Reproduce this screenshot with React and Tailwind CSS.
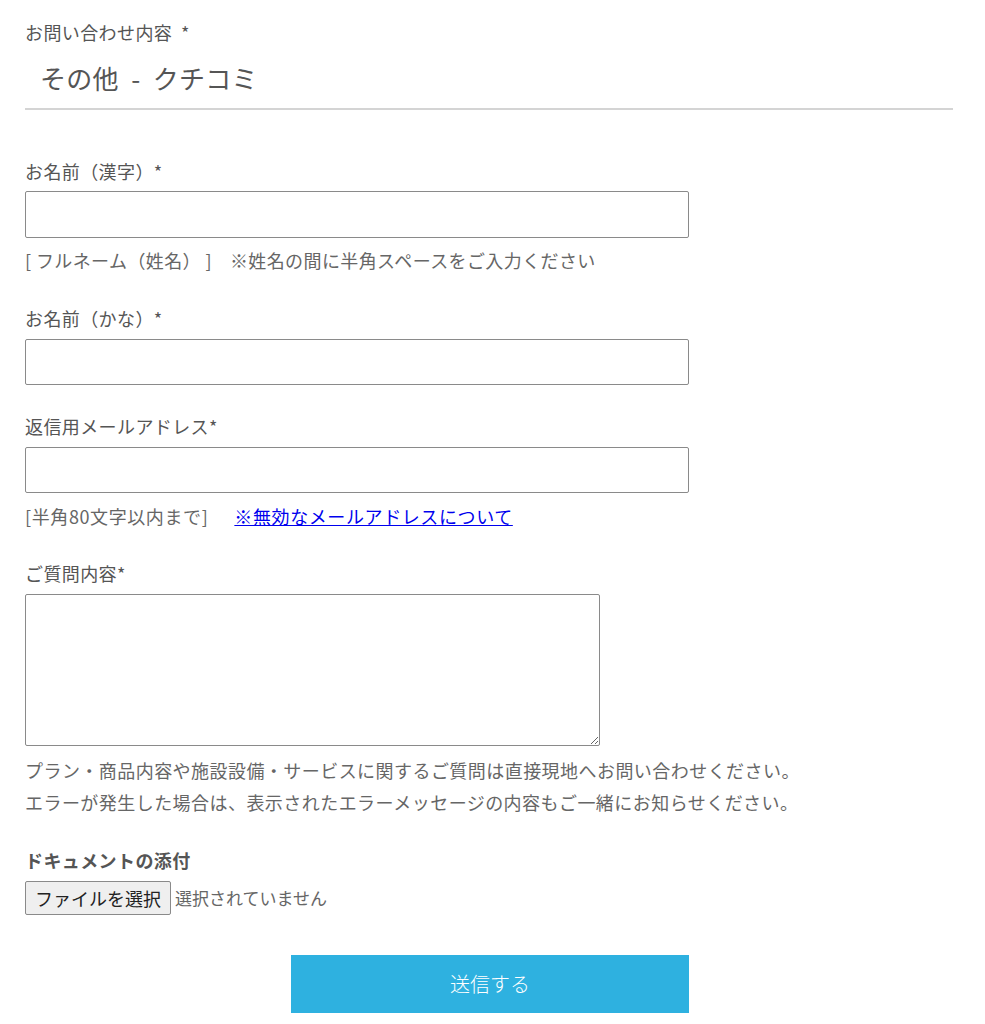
import React from "react";

const fontStack = { fontFamily: '"Noto Sans CJK JP", "Noto Sans", sans-serif' };

const Label = ({ children, className = "" }) => (
  <div className={`text-[18px] tracking-[0.4px] leading-[26px] text-[#555] ${className}`}>{children}</div>
);

const TextInput = ({ className = "" }) => (
  <input
    type="text"
    className={`block w-[664px] border border-[#8a8a8a] rounded-[2px] px-2 text-[17px] bg-white ${className}`}
  />
);

const App = () => {
  return (
    <div style={fontStack} className="bg-white min-h-[1024px] pl-[25px] pt-[19px] w-[953px]">
      <Label>お問い合わせ内容&nbsp;&nbsp;*</Label>
      <div className="mt-[15px] pl-[15px] text-[26px] tracking-[0.3px] leading-[36px] text-[#555]">
        その他&nbsp;&nbsp;-&nbsp;&nbsp;クチコミ
      </div>
      <hr className="mt-[12px] border-0 h-[2px] bg-[#d4d4d4]" />

      <Label className="mt-[48px]">お名前（漢字）*</Label>
      <TextInput className="mt-[7px] h-[47px]" />
      <div className="mt-[9px] text-[18px] tracking-[0.4px] leading-[26px] text-[#666]">
        [&nbsp;フルネーム（姓名）&nbsp;]<span className="ml-[18px]">※姓名の間に半角スペースをご入力ください</span>
      </div>

      <Label className="mt-[32px]">お名前（かな）*</Label>
      <TextInput className="mt-[8px] h-[46px]" />

      <Label className="mt-[28px]">返信用メールアドレス*</Label>
      <TextInput className="mt-[8px] h-[46px]" />
      <div className="mt-[10px] text-[18px] tracking-[0.6px] leading-[26px] text-[#666]">
        [半角80文字以内まで]
        <a href="#" className="ml-[26px] text-[#0000ee] underline">
          ※無効なメールアドレスについて
        </a>
      </div>

      <Label className="mt-[31px]">ご質問内容*</Label>
      <textarea className="block mt-[8px] w-[575px] h-[152px] border border-[#8a8a8a] rounded-[2px] p-2 text-[17px] bg-white" />
      <div className="mt-[8px] text-[18px] tracking-[0.45px] leading-[32px] text-[#666]">
        <p>プラン・商品内容や施設設備・サービスに関するご質問は直接現地へお問い合わせください。</p>
        <p>エラーが発生した場合は、表示されたエラーメッセージの内容もご一緒にお知らせください。</p>
      </div>

      <Label className="mt-[29px] font-bold">ドキュメントの添付</Label>
      <div className="mt-[8px] flex items-center gap-[4px]">
        <button className="h-[34px] w-[146px] border border-[#8a8a8a] rounded-[2px] bg-[#efefef] text-[18px] text-[#222] px-[4px] whitespace-nowrap">
          ファイルを選択
        </button>
        <span className="text-[17px] text-[#666]">選択されていません</span>
      </div>

      <div className="mt-[40px] pl-[266px]">
        <button className="w-[398px] h-[58px] bg-[#2eb1e0] text-white text-[20px] font-light">送信する</button>
      </div>
    </div>
  );
};

export default App;
